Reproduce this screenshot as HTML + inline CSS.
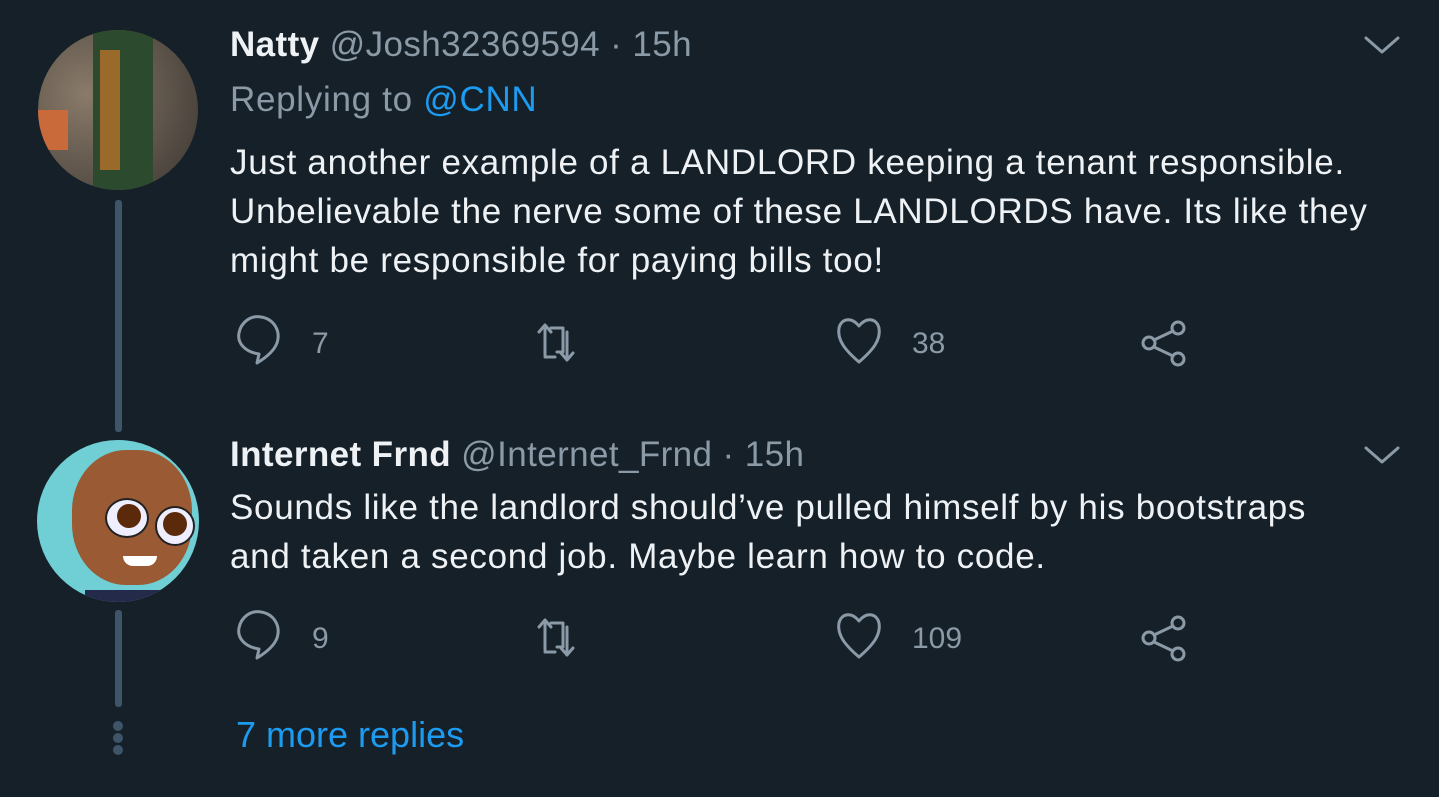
<!DOCTYPE html>
<html><head><meta charset="utf-8"><style>
body{margin:0;width:1439px;height:797px;background:#162029;overflow:hidden;font-family:"Liberation Sans",sans-serif;position:relative;color:#e6ebef}
.a{position:absolute;white-space:nowrap}
.name{font-size:35px;letter-spacing:0.4px;font-weight:bold;color:#eef2f5}
.g{color:#8b9aa7;font-weight:normal}
.t{font-size:35px;letter-spacing:0.7px;line-height:49px;color:#eef2f5}
.line{position:absolute;left:115px;width:7px;background:#3e5468;border-radius:3px}
.cnt{font-size:30px;color:#8b9aa7}
</style></head><body>
<div style="position:absolute;left:38px;top:30px;width:160px;height:160px;border-radius:50%;background:radial-gradient(circle at 30% 40%,#8a7b6a,#5a5148 60%,#3a3530);overflow:hidden">
<div style="position:absolute;left:55px;top:0;width:60px;height:160px;background:#2c4a2e"></div>
<div style="position:absolute;left:62px;top:20px;width:20px;height:120px;background:#9a6a2a"></div>
<div style="position:absolute;left:0;top:80px;width:30px;height:40px;background:#c96a3a"></div>
</div>
<div class="line" style="top:200px;height:232px"></div>
<div style="position:absolute;left:37px;top:440px;width:162px;height:162px;border-radius:50%;background:#6fcfd4;overflow:hidden">
<div style="position:absolute;left:35px;top:10px;width:120px;height:135px;border-radius:45%;background:#9a5a34"></div>
<div style="position:absolute;left:48px;top:150px;width:100px;height:40px;background:#232a4a"></div>
<div style="position:absolute;left:68px;top:58px;width:40px;height:36px;border-radius:50%;background:#eef;border:2px solid #222"></div>
<div style="position:absolute;left:80px;top:64px;width:24px;height:24px;border-radius:50%;background:#5a2a0a"></div>
<div style="position:absolute;left:118px;top:66px;width:36px;height:36px;border-radius:50%;background:#eef;border:2px solid #222"></div>
<div style="position:absolute;left:126px;top:72px;width:24px;height:24px;border-radius:50%;background:#5a2a0a"></div>
<div style="position:absolute;left:86px;top:116px;width:34px;height:10px;border-radius:0 0 20px 20px;background:#fff"></div>
</div>
<div class="line" style="top:610px;height:97px"></div>
<div style="position:absolute;left:113px;top:721px;width:10px;height:10px;border-radius:50%;background:#3e5468"></div>
<div style="position:absolute;left:113px;top:733px;width:10px;height:10px;border-radius:50%;background:#3e5468"></div>
<div style="position:absolute;left:113px;top:745px;width:10px;height:10px;border-radius:50%;background:#3e5468"></div>

<div class="a name" style="left:230px;top:25px">Natty <span class="g">@Josh32369594 · 15h</span></div>
<div class="a t" style="left:230px;top:75px;color:#8b9aa7">Replying to <span style="color:#1d9bf0">@CNN</span></div>
<div class="a t" style="left:230px;top:138px">Just another example of a LANDLORD keeping a tenant responsible.<br>Unbelievable the nerve some of these LANDLORDS have. Its like they<br>might be responsible for paying bills too!</div>

<div class="a name" style="left:230px;top:435px">Internet Frnd <span class="g">@Internet_Frnd · 15h</span></div>
<div class="a t" style="left:230px;top:483px">Sounds like the landlord should’ve pulled himself by his bootstraps<br>and taken a second job. Maybe learn how to code.</div>
<div class="a" style="left:236px;top:714px;font-size:36px;color:#1d9bf0">7 more replies</div>

<svg width="1439" height="797" style="position:absolute;left:0;top:0" fill="none" stroke="#8b9aa7" stroke-width="3" stroke-linecap="round" stroke-linejoin="round">
<path d="M1366 38l16 14 16-14"/>
<path d="M1366 448l16 14 16-14"/>
<g id="r1">
<path d="M257 363l2-9c-14-2-22-11-20-21 2-11 12-18 22-16 13 2 20 14 16 26-3 8-10 14-20 20z"/>
<path d="M545 355v-29M539 332l6-7 6 7M551 328h12v24h-6M567 332v27M561 353l6 7 6-7M555 357h-10"/>
<path d="M859 362c-14-12-22-22-20-34 2-9 12-12 20-2 8-10 18-7 20 2 2 12-6 22-20 34z"/>
<circle cx="1178" cy="328" r="6"/><circle cx="1149" cy="343" r="6"/><circle cx="1178" cy="359" r="6"/>
<path d="M1154 340l19-9M1154 347l19 9"/>
</g>
<use href="#r1" y="295"/>
</svg>
<div class="a cnt" style="left:312px;top:327px">7</div>
<div class="a cnt" style="left:912px;top:327px">38</div>
<div class="a cnt" style="left:312px;top:622px">9</div>
<div class="a cnt" style="left:912px;top:622px">109</div>
</body></html>
